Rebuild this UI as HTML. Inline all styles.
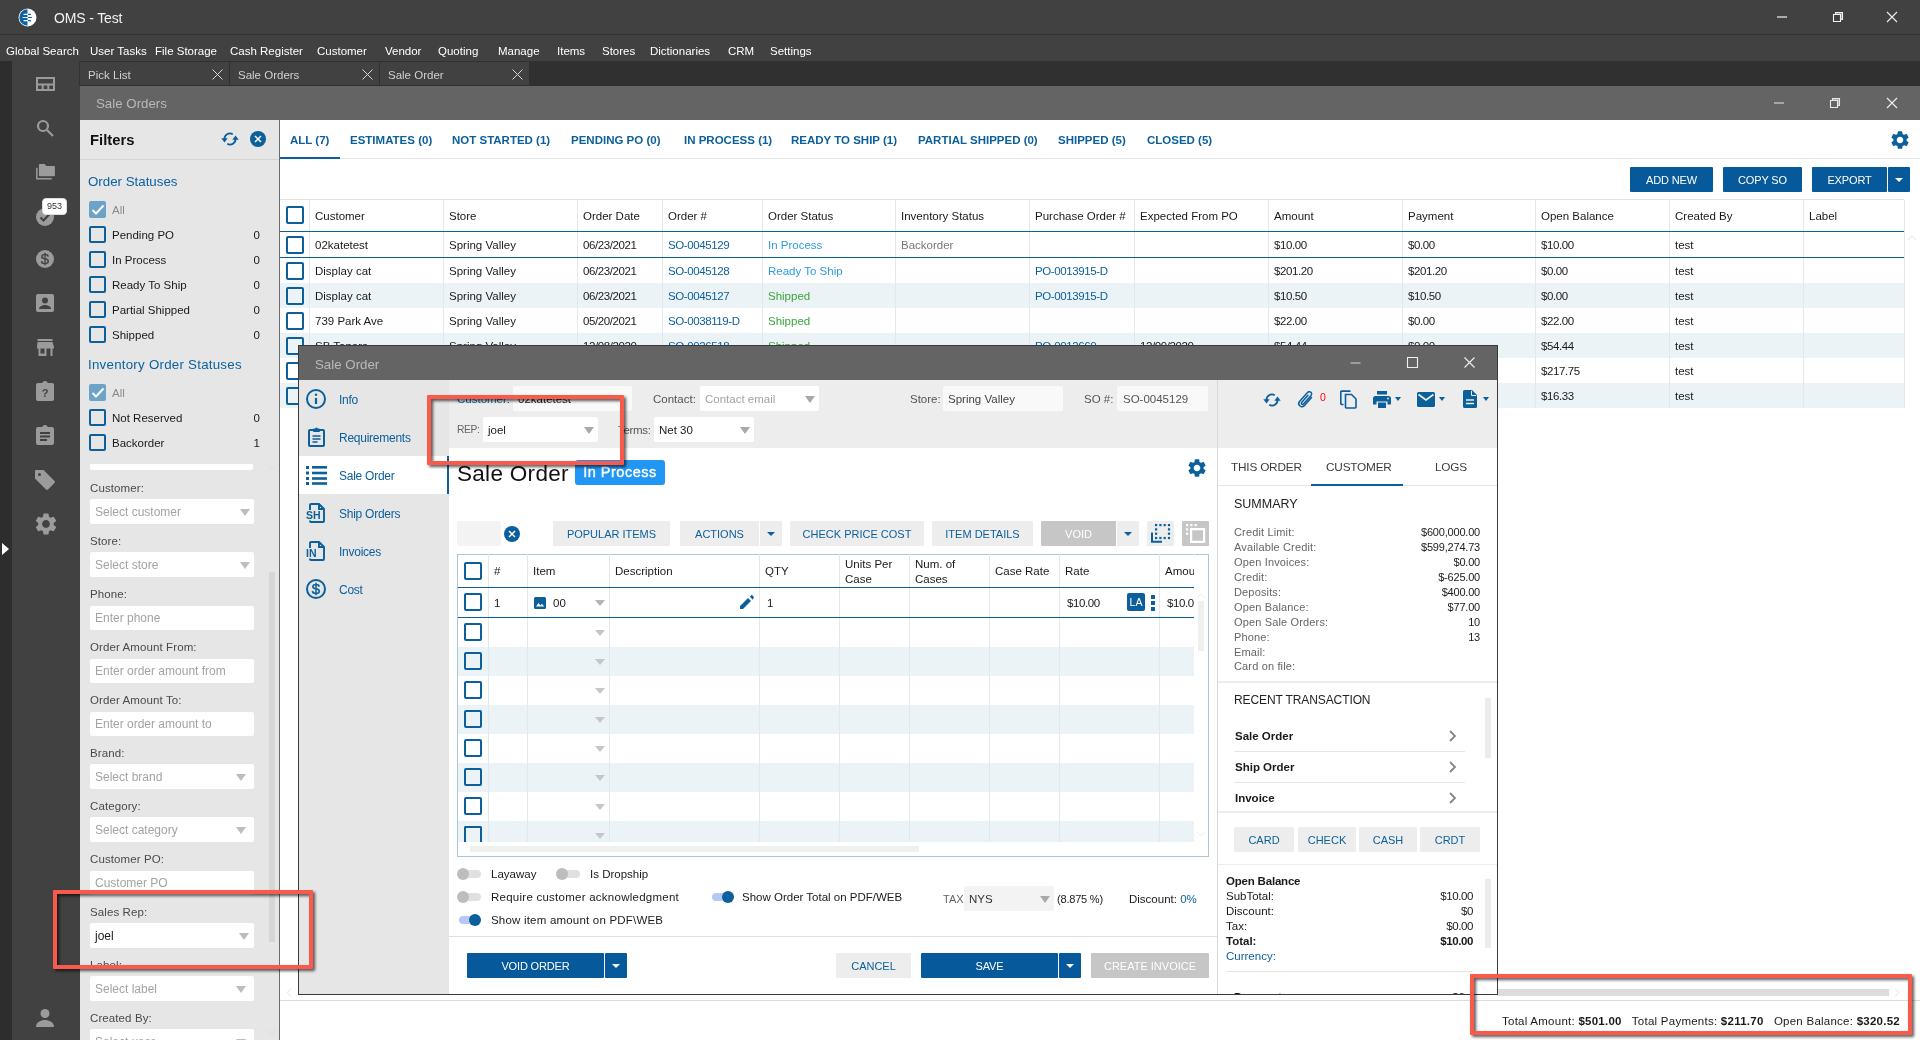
<!DOCTYPE html>
<html lang="en">
<head>
<meta charset="utf-8">
<title>OMS - Test</title>
<style>
*{box-sizing:border-box;margin:0;padding:0}
html,body{width:1920px;height:1040px;overflow:hidden;background:#fff}
body{font-family:"Liberation Sans",sans-serif;font-size:11.5px;color:#1a1a1a;position:relative}
.a{position:absolute}
.t{position:absolute;white-space:nowrap;line-height:16px;height:16px}
.w{color:#fff}
.b{font-weight:bold}
.bl{color:#0b5f9b}
.g{color:#6e6e6e}
svg{position:absolute;overflow:visible}
/* chrome */
#titlebar{left:0;top:0;width:1920px;height:34px;background:#414141}
#titleline{left:0;top:34px;width:1920px;height:1px;background:#333}
#menubar{left:0;top:35px;width:1920px;height:26px;background:#414141}
#tabstrip{left:0;top:61px;width:1920px;height:25px;background:#303030}
#leftedge{left:0;top:61px;width:12px;height:979px;background:#2d2d2d}
#sidebar{left:12px;top:61px;width:68px;height:979px;background:#414141}
.mtab{position:absolute;top:62px;height:23px;width:149px;background:#414141}
.mtab span{position:absolute;left:8px;top:5px;line-height:16px;color:#d0d0d0;font-size:11.5px}
#sohead{left:80px;top:86px;width:1840px;height:34px;background:#646464}
/* filter */
#filters{left:80px;top:120px;width:199px;height:920px;background:#e6e6e6}
#fborder{left:279px;top:120px;width:1px;height:920px;background:#6a6a6a}
.cb{position:absolute;width:17px;height:17px;border:2px solid #0b5f9b;border-radius:2px}
.cbg{background:transparent}
.cbon{position:absolute;width:17px;height:17px;border-radius:2px;background:#6ea3c8}
.fl{position:absolute;left:90px;font-size:11.5px;letter-spacing:.1px;color:#4a4a4a;line-height:14px;white-space:nowrap}
.fi{position:absolute;left:90px;width:164px;height:25px;background:#fff;border-radius:2px;font-size:12px;color:#a3a3a3;line-height:26px;padding-left:5px;white-space:nowrap}
.tri{position:absolute;width:0;height:0;border-left:5px solid transparent;border-right:5px solid transparent;border-top:7px solid #a9a9a9}
.stab{color:#0b5f9b;font-size:11.5px}
.pbtn{background:#06599a;color:#fff;text-align:center;font-size:11px;letter-spacing:-.15px;border-radius:1px;white-space:nowrap}
#root{position:absolute;left:0;top:0;width:1920px;height:1040px;overflow:hidden;will-change:transform}
</style>
</head>
<body>
<div id="root">
<!-- ===== app chrome ===== -->
<div class="a" id="titlebar"></div>
<div class="a" id="titleline"></div>
<div class="a" id="menubar"></div>
<div class="a" id="tabstrip"></div>
<div class="a" id="leftedge"></div>
<div class="a" id="sidebar"></div>
<!-- logo -->
<svg class="a" style="left:17.500px;top:7.500px" width="19" height="19" viewBox="0 0 19 19">
  <circle cx="9.5" cy="9.5" r="9" fill="#fff"/>
  <path d="M9.5 1.3 A8.2 8.2 0 0 0 9.5 17.7 Z" fill="#0b63a5"/>
  <g stroke="#fff" stroke-width="1.2" stroke-linecap="round"><path d="M6 6.3h4M5 9.5h5M6 12.7h4"/></g>
  <g stroke="#0b63a5" stroke-width="1.2" stroke-linecap="round"><path d="M10.5 6.3h2M10.5 9.5h3M10.5 12.7h2"/></g>
</svg>
<div class="t w" style="left:54px;top:8px;font-size:14px;line-height:20px;height:20px;color:#f2f2f2;letter-spacing:-.15px">OMS - Test</div>
<!-- main window controls -->
<svg style="left:1776px;top:10px" width="130" height="14" viewBox="0 0 130 14" fill="none" stroke="#f0f0f0" stroke-width="1.1">
  <path d="M1 7h10" stroke="#cfcfcf" stroke-width="1.500"/>
  <path d="M59.500 4.500v-2h7v7h-2z" fill="#9a9a9a"/><path d="M57.500 4.500h7v7h-7z" fill="#414141"/>
  <path d="M111 2l10 10M121 2l-10 10"/>
</svg>
<!-- menu -->
<div class="t w" style="left:6px;top:43px">Global Search</div>
<div class="t w" style="left:90px;top:43px">User Tasks</div>
<div class="t w" style="left:155px;top:43px">File Storage</div>
<div class="t w" style="left:230px;top:43px">Cash Register</div>
<div class="t w" style="left:317px;top:43px">Customer</div>
<div class="t w" style="left:385px;top:43px">Vendor</div>
<div class="t w" style="left:438px;top:43px">Quoting</div>
<div class="t w" style="left:498px;top:43px">Manage</div>
<div class="t w" style="left:557px;top:43px">Items</div>
<div class="t w" style="left:602px;top:43px">Stores</div>
<div class="t w" style="left:650px;top:43px">Dictionaries</div>
<div class="t w" style="left:728px;top:43px">CRM</div>
<div class="t w" style="left:770px;top:43px">Settings</div>
<!-- doc tabs -->
<div class="a" id="vline79" style="left:79px;top:61px;width:1px;height:25px;background:#333"></div>
<div class="mtab" style="left:80px"><span>Pick List</span></div>
<div class="mtab" style="left:230px"><span>Sale Orders</span></div>
<div class="mtab" style="left:380px"><span>Sale Order</span></div>
<svg style="left:212px;top:69px" width="320" height="11" viewBox="0 0 320 11" fill="none" stroke="#d8d8d8" stroke-width="1">
  <path d="M0.5 0.5l10 10M10.5 0.5l-10 10"/>
  <path d="M150.5 0.5l10 10M160.5 0.5l-10 10"/>
  <path d="M300.5 0.5l10 10M310.5 0.5l-10 10"/>
</svg>
<!-- sale orders window header -->
<div class="a" id="sohead"></div>
<div class="t" style="left:96px;top:95px;font-size:13.3px;line-height:18px;height:18px;color:#b9b9b9">Sale Orders</div>
<svg style="left:1773px;top:96px" width="130" height="14" viewBox="0 0 130 14" fill="none" stroke-width="1.1">
  <path d="M1 7h10" stroke="#bdbdbd" stroke-width="1.500"/>
  <path d="M59.500 4.500v-2h7v7h-2z" stroke="#e8e8e8" fill="#a9a9a9"/><path d="M57.500 4.500h7v7h-7z" stroke="#e8e8e8" fill="#646464"/>
  <path d="M114 2l10 10M124 2l-10 10" stroke="#f0f0f0"/>
</svg>
<!-- sidebar icons -->
<svg style="left:36px;top:77px" width="19" height="14" viewBox="0 0 19 14" fill="none" stroke="#9b9b9b" stroke-width="2"><path d="M1 1h17v12h-17zM1 7.500h17M6.700 7.500v5.500M12.300 7.500v5.500"/></svg>
<svg style="left:36px;top:119px" width="18" height="18" viewBox="0 0 18 18" fill="none" stroke="#9b9b9b" stroke-width="2.2"><circle cx="7" cy="7" r="5"/><path d="M11 11l6 6"/></svg>
<svg style="left:36px;top:164px" width="19" height="16" viewBox="0 0 20 17" fill="#9b9b9b"><path d="M4 0h5l2 2h8a1 1 0 0 1 1 1v9a1 1 0 0 1-1 1h-15a1 1 0 0 1-1-1v-11a1 1 0 0 1 1-1z"/><path d="M0 4h1.6v11h15v1.6h-15.6a1 1 0 0 1-1-1z"/></svg>
<svg style="left:36px;top:208px" width="18" height="18" viewBox="0 0 18 18"><circle cx="9" cy="9" r="9" fill="#9b9b9b"/><path d="M4.5 9.5l3 3 6-6.5" fill="none" stroke="#414141" stroke-width="2"/></svg>
<div class="a" style="left:42px;top:198px;width:25px;height:17px;border-radius:4px;background:#fff;border:1px solid #ddd;font-size:9px;line-height:15px;text-align:center;color:#333">953</div>
<svg style="left:36px;top:250px" width="18" height="18" viewBox="0 0 18 18"><circle cx="9" cy="9" r="9" fill="#9b9b9b"/><text x="9" y="14.3" font-size="15" font-family="Liberation Sans" fill="#414141" stroke="#414141" stroke-width=".3" text-anchor="middle">$</text></svg>
<svg style="left:36px;top:294px" width="18" height="18" viewBox="0 0 18 18"><path d="M2 0h14a2 2 0 0 1 2 2v14a2 2 0 0 1-2 2h-14a2 2 0 0 1-2-2v-14a2 2 0 0 1 2-2z" fill="#9b9b9b"/><circle cx="9" cy="6.5" r="3" fill="#414141"/><path d="M3 15c0-3 4-4 6-4s6 1 6 4z" fill="#414141"/></svg>
<svg style="left:36px;top:339px" width="18" height="17" viewBox="0 0 18 17" fill="#9b9b9b"><path d="M1.5 0h15v2h-15z"/><path d="M1.5 3h15l1.5 5v1.5h-1.5v7.5h-2v-7.5h-4v7.5h-8v-7.5h-1.500v-1.500zM4.500 9.500v5h4v-5z"/></svg>
<svg style="left:36px;top:381px" width="18" height="20" viewBox="0 0 18 20"><path d="M2 2h4.200a3 3 0 0 1 5.600 0h4.200a2 2 0 0 1 2 2v14a2 2 0 0 1-2 2h-14a2 2 0 0 1-2-2v-14a2 2 0 0 1 2-2z" fill="#9b9b9b"/><text x="9" y="15.500" font-size="11" font-family="Liberation Sans" font-weight="bold" fill="#414141" text-anchor="middle">?</text></svg>
<svg style="left:36px;top:425px" width="18" height="20" viewBox="0 0 18 20"><path d="M2 2h4.200a3 3 0 0 1 5.600 0h4.200a2 2 0 0 1 2 2v14a2 2 0 0 1-2 2h-14a2 2 0 0 1-2-2v-14a2 2 0 0 1 2-2z" fill="#9b9b9b"/><path d="M4 8h10M4 11.500h10M4 15h7" stroke="#414141" stroke-width="1.800"/></svg>
<svg style="left:35px;top:470px" width="20" height="20" viewBox="0 0 20 20"><path d="M1 0h7.500l11 11a1.500 1.500 0 0 1 0 2l-6.500 6.500a1.500 1.500 0 0 1-2 0l-11-11v-7.500a1 1 0 0 1 1-1z" fill="#9b9b9b"/><circle cx="4.500" cy="4.500" r="1.500" fill="#414141"/></svg>
<svg style="left:32.5px;top:511px" width="26" height="26" viewBox="0 0 24 24"><path fill="#9b9b9b" d="M19.140 12.940c.040-.300.060-.610.060-.940 0-.320-.020-.640-.070-.940l2.030-1.580a.49.490 0 0 0 .12-.610l-1.920-3.320a.488.488 0 0 0-.590-.220l-2.390.960c-.500-.380-1.030-.700-1.620-.940l-.360-2.540a.484.484 0 0 0-.480-.410h-3.840c-.240 0-.430.170-.470.410l-.360 2.540c-.590.240-1.130.570-1.620.940l-2.390-.960c-.220-.080-.470 0-.590.220L2.740 8.870c-.120.210-.080.470.120.610l2.030 1.580c-.050.300-.090.630-.090.940s.020.640.070.940l-2.030 1.580a.49.490 0 0 0-.12.610l1.920 3.320c.120.220.370.290.590.220l2.390-.960c.500.380 1.030.700 1.620.940l.360 2.540c.050.240.240.410.480.410h3.840c.240 0 .440-.170.470-.410l.360-2.540c.590-.240 1.130-.560 1.620-.940l2.390.960c.220.080.470 0 .590-.220l1.920-3.320c.120-.220.070-.470-.120-.610l-2.010-1.580zM12 15.600c-1.980 0-3.600-1.620-3.600-3.600s1.620-3.600 3.600-3.600 3.600 1.620 3.600 3.600-1.620 3.600-3.600 3.600z"/></svg>
<svg style="left:36px;top:1009px" width="18" height="18" viewBox="0 0 18 18" fill="#9b9b9b"><circle cx="9" cy="4.500" r="4.500"/><path d="M0 18c0-5 5-7 9-7s9 2 9 7z"/></svg>
<svg style="left:2px;top:543px" width="7" height="12" viewBox="0 0 7 12"><path d="M0 0l7 6-7 6z" fill="#fff"/></svg>
<!--CHROME-->
<!--FILTERS_START-->
<div class="a" id="filters"></div><div class="a" id="fborder"></div>
<div class="t b" style="left:90px;top:130px;font-size:14.8px;line-height:20px;height:20px;color:#111">Filters</div>
<div class="a" style="left:80px;top:159px;width:199px;height:1px;background:#d4d4d4"></div>
<svg style="left:220.500px;top:131.500px" width="18" height="14" viewBox="0 0 18 14" fill="none" stroke="#0b5f9b" stroke-width="1.800"><path d="M3.500 7.500A5.500 5.500 0 0 1 11.750 2.240"/><path d="M14.500 6.500A5.500 5.500 0 0 1 6.250 11.760"/><path d="M0.300 6.300h6.400l-3.200 4.200z" fill="#0b5f9b" stroke="none"/><path d="M11.300 7.700h6.400l-3.200-4.200z" fill="#0b5f9b" stroke="none"/></svg>
<svg style="left:250px;top:131px" width="16" height="16" viewBox="0 0 16 16"><circle cx="8" cy="8" r="8" fill="#0b5f9b"/><path d="M5 5l6 6M11 5l-6 6" stroke="#fff" stroke-width="1.500"/></svg>
<div class="t" style="left:88px;top:173px;font-size:13.3px;line-height:18px;height:18px;color:#0b62a0">Order Statuses</div>
<div class="cbon" style="left:89px;top:201px"></div><svg style="left:91px;top:204px" width="14" height="12" viewBox="0 0 14 12"><path d="M1.500 6l3.500 3.500 7.500-8" fill="none" stroke="#fff" stroke-width="2"/></svg>
<div class="t" style="left:112px;top:202px;color:#8a8a8a">All</div>
<div class="cb" style="left:89px;top:226px"></div>
<div class="t" style="left:112px;top:227px">Pending PO</div>
<div class="t" style="left:230px;width:30px;text-align:right;top:227px">0</div>
<div class="cb" style="left:89px;top:251px"></div>
<div class="t" style="left:112px;top:252px">In Process</div>
<div class="t" style="left:230px;width:30px;text-align:right;top:252px">0</div>
<div class="cb" style="left:89px;top:276px"></div>
<div class="t" style="left:112px;top:277px">Ready To Ship</div>
<div class="t" style="left:230px;width:30px;text-align:right;top:277px">0</div>
<div class="cb" style="left:89px;top:301px"></div>
<div class="t" style="left:112px;top:302px">Partial Shipped</div>
<div class="t" style="left:230px;width:30px;text-align:right;top:302px">0</div>
<div class="cb" style="left:89px;top:326px"></div>
<div class="t" style="left:112px;top:327px">Shipped</div>
<div class="t" style="left:230px;width:30px;text-align:right;top:327px">0</div>
<div class="t" style="left:88px;top:356px;font-size:13.3px;line-height:18px;height:18px;color:#0b62a0;letter-spacing:.25px">Inventory Order Statuses</div>
<div class="cbon" style="left:89px;top:384px"></div><svg style="left:91px;top:387px" width="14" height="12" viewBox="0 0 14 12"><path d="M1.500 6l3.500 3.500 7.500-8" fill="none" stroke="#fff" stroke-width="2"/></svg>
<div class="t" style="left:112px;top:385px;color:#8a8a8a">All</div>
<div class="cb" style="left:89px;top:409px"></div>
<div class="t" style="left:112px;top:410px">Not Reserved</div>
<div class="t" style="left:230px;width:30px;text-align:right;top:410px">0</div>
<div class="cb" style="left:89px;top:434px"></div>
<div class="t" style="left:112px;top:435px">Backorder</div>
<div class="t" style="left:230px;width:30px;text-align:right;top:435px">1</div>
<div class="a" style="left:90px;top:464px;width:163px;height:6px;background:#fff;border-radius:0 0 2px 2px"></div>
<div class="fl" style="top:481px">Customer:</div>
<div class="fi" style="top:499px">Select customer</div>
<div class="tri" style="left:240px;top:508.5px;border-top-color:#bdbdbd"></div>
<div class="fl" style="top:534px">Store:</div>
<div class="fi" style="top:552px">Select store</div>
<div class="tri" style="left:239.5px;top:561.5px;border-top-color:#bdbdbd"></div>
<div class="fl" style="top:587px">Phone:</div>
<div class="fi" style="top:606px;height:24px;line-height:24px">Enter phone</div>
<div class="fl" style="top:640px">Order Amount From:</div>
<div class="fi" style="top:659px;height:24px;line-height:24px">Enter order amount from</div>
<div class="fl" style="top:693px">Order Amount To:</div>
<div class="fi" style="top:712px;height:24px;line-height:24px">Enter order amount to</div>
<div class="fl" style="top:746px">Brand:</div>
<div class="fi" style="top:764px">Select brand</div>
<div class="tri" style="left:236px;top:773.5px;border-top-color:#bdbdbd"></div>
<div class="fl" style="top:799px">Category:</div>
<div class="fi" style="top:817px">Select category</div>
<div class="tri" style="left:236px;top:826.5px;border-top-color:#bdbdbd"></div>
<div class="fl" style="top:852px">Customer PO:</div>
<div class="fi" style="top:871px;height:24px;line-height:24px">Customer PO</div>
<div class="fl" style="top:905px">Sales Rep:</div>
<div class="fi" style="top:923px;color:#1a1a1a">joel</div>
<div class="tri" style="left:239px;top:932.5px;border-top-color:#bdbdbd"></div>
<div class="fl" style="top:958px">Label:</div>
<div class="fi" style="top:976px">Select label</div>
<div class="tri" style="left:236px;top:985.5px;border-top-color:#bdbdbd"></div>
<div class="fl" style="top:1011px">Created By:</div>
<div class="fi" style="top:1029px">Select user</div>
<div class="tri" style="left:236px;top:1038.5px;border-top-color:#bdbdbd"></div>
<div class="a" style="left:269px;top:572px;width:6px;height:370px;background:#d6d6d6"></div>
<svg style="left:267px;top:466px" width="10" height="6" viewBox="0 0 10 6"><path d="M1 5l4-4 4 4" fill="none" stroke="#dcdcdc" stroke-width="1"/></svg>
<svg style="left:267px;top:1029px" width="10" height="6" viewBox="0 0 10 6"><path d="M1 1l4 4 4-4" fill="none" stroke="#dcdcdc" stroke-width="1"/></svg>
<!--FILTERS-->
<!--MAIN_START-->
<div class="t b stab" style="left:290px;top:132px" >ALL (7)</div>
<div class="t b stab" style="left:350px;top:132px" >ESTIMATES (0)</div>
<div class="t b stab" style="left:452px;top:132px" >NOT STARTED (1)</div>
<div class="t b stab" style="left:571px;top:132px" >PENDING PO (0)</div>
<div class="t b stab" style="left:684px;top:132px" >IN PROCESS (1)</div>
<div class="t b stab" style="left:791px;top:132px" >READY TO SHIP (1)</div>
<div class="t b stab" style="left:918px;top:132px" >PARTIAL SHIPPED (0)</div>
<div class="t b stab" style="left:1058px;top:132px" >SHIPPED (5)</div>
<div class="t b stab" style="left:1147px;top:132px" >CLOSED (5)</div>
<div class="a" style="left:280px;top:157px;width:60px;height:2px;background:#0b5f9b"></div>
<div class="a" style="left:340px;top:158px;width:1580px;height:1px;background:#e4e4e4"></div>
<svg style="left:1889px;top:129px" width="22" height="22" viewBox="0 0 24 24"><path fill="#0b5f9b" d="M19.140 12.940c.040-.300.060-.610.060-.940 0-.320-.020-.640-.070-.940l2.030-1.580a.49.490 0 0 0 .12-.610l-1.920-3.320a.488.488 0 0 0-.590-.220l-2.390.960c-.500-.380-1.030-.700-1.620-.940l-.360-2.540a.484.484 0 0 0-.480-.410h-3.840c-.240 0-.430.170-.470.410l-.360 2.540c-.590.240-1.130.570-1.620.940l-2.390-.960c-.220-.080-.470 0-.590.220L2.740 8.870c-.120.210-.080.470.120.610l2.030 1.580c-.050.300-.090.630-.090.940s.020.640.070.940l-2.030 1.580a.49.490 0 0 0-.12.610l1.920 3.320c.120.220.370.290.590.220l2.390-.960c.500.380 1.030.700 1.620.940l.360 2.540c.050.240.240.410.480.410h3.840c.240 0 .440-.170.470-.410l.360-2.540c.590-.240 1.130-.560 1.620-.940l2.390.960c.220.080.470 0 .590-.220l1.920-3.320c.120-.220.070-.470-.120-.610l-2.010-1.580zM12 15.600c-1.980 0-3.600-1.620-3.600-3.600s1.620-3.600 3.600-3.600 3.600 1.620 3.600 3.600-1.620 3.600-3.600 3.600z"/></svg>
<div class="a pbtn" style="left:1630px;top:167px;width:83px;height:25px;line-height:26px">ADD NEW</div>
<div class="a pbtn" style="left:1723px;top:167px;width:79px;height:25px;line-height:26px">COPY SO</div>
<div class="a pbtn" style="left:1812px;top:167px;width:75px;height:25px;line-height:26px">EXPORT</div>
<div class="a pbtn" style="left:1888px;top:167px;width:22px;height:25px"></div><div class="tri" style="left:1895px;top:178px;border-top-color:#fff;border-width:4px 4px 0 4px;border-top-width:4px"></div>
<div class="a" style="left:280px;top:199px;width:1624px;height:1px;background:#dfe3e6"></div>
<div class="a" style="left:280px;top:283px;width:1624px;height:25px;background:#ecf3f7"></div>
<div class="a" style="left:280px;top:333px;width:1624px;height:25px;background:#ecf3f7"></div>
<div class="a" style="left:280px;top:383px;width:1624px;height:25px;background:#ecf3f7"></div>
<div class="a" style="left:309px;top:200px;width:1px;height:208px;background:#e3e8ec"></div>
<div class="a" style="left:443px;top:200px;width:1px;height:208px;background:#e3e8ec"></div>
<div class="a" style="left:577px;top:200px;width:1px;height:208px;background:#e3e8ec"></div>
<div class="a" style="left:662px;top:200px;width:1px;height:208px;background:#e3e8ec"></div>
<div class="a" style="left:762px;top:200px;width:1px;height:208px;background:#e3e8ec"></div>
<div class="a" style="left:895px;top:200px;width:1px;height:208px;background:#e3e8ec"></div>
<div class="a" style="left:1029px;top:200px;width:1px;height:208px;background:#e3e8ec"></div>
<div class="a" style="left:1134px;top:200px;width:1px;height:208px;background:#e3e8ec"></div>
<div class="a" style="left:1268px;top:200px;width:1px;height:208px;background:#e3e8ec"></div>
<div class="a" style="left:1402px;top:200px;width:1px;height:208px;background:#e3e8ec"></div>
<div class="a" style="left:1535px;top:200px;width:1px;height:208px;background:#e3e8ec"></div>
<div class="a" style="left:1669px;top:200px;width:1px;height:208px;background:#e3e8ec"></div>
<div class="a" style="left:1803px;top:200px;width:1px;height:208px;background:#e3e8ec"></div>
<div class="a" style="left:1904px;top:200px;width:1px;height:208px;background:#e3e8ec"></div>
<div class="t" style="left:315px;top:208px">Customer</div>
<div class="t" style="left:449px;top:208px">Store</div>
<div class="t" style="left:583px;top:208px">Order Date</div>
<div class="t" style="left:668px;top:208px">Order #</div>
<div class="t" style="left:768px;top:208px">Order Status</div>
<div class="t" style="left:901px;top:208px">Inventory Status</div>
<div class="t" style="left:1035px;top:208px">Purchase Order #</div>
<div class="t" style="left:1140px;top:208px">Expected From PO</div>
<div class="t" style="left:1274px;top:208px">Amount</div>
<div class="t" style="left:1408px;top:208px">Payment</div>
<div class="t" style="left:1541px;top:208px">Open Balance</div>
<div class="t" style="left:1675px;top:208px">Created By</div>
<div class="t" style="left:1809px;top:208px">Label</div>
<div class="cb" style="left:286px;top:206px;width:18px;height:18px"></div>
<div class="a" style="left:280px;top:231px;width:1624px;height:1px;background:#0b5f9b"></div>
<div class="a" style="left:280px;top:257px;width:1624px;height:1px;background:#0b5f9b"></div>
<div class="cb" style="left:286px;top:236px;width:18px;height:18px"></div>
<div class="t" style="left:315px;top:237px">02katetest</div>
<div class="t" style="left:449px;top:237px">Spring Valley</div>
<div class="t" style="left:583px;top:237px;letter-spacing:-.4px">06/23/2021</div>
<div class="t" style="left:668px;top:237px;color:#0b5f9b;letter-spacing:-.4px">SO-0045129</div>
<div class="t" style="left:768px;top:237px;color:#2f9ae0">In Process</div>
<div class="t" style="left:901px;top:237px;color:#777">Backorder</div>
<div class="t" style="left:1274px;top:237px;letter-spacing:-.4px">$10.00</div>
<div class="t" style="left:1408px;top:237px;letter-spacing:-.4px">$0.00</div>
<div class="t" style="left:1541px;top:237px;letter-spacing:-.4px">$10.00</div>
<div class="t" style="left:1675px;top:237px">test</div>
<div class="cb" style="left:286px;top:262px;width:18px;height:18px"></div>
<div class="t" style="left:315px;top:263px">Display cat</div>
<div class="t" style="left:449px;top:263px">Spring Valley</div>
<div class="t" style="left:583px;top:263px;letter-spacing:-.4px">06/23/2021</div>
<div class="t" style="left:668px;top:263px;color:#0b5f9b;letter-spacing:-.4px">SO-0045128</div>
<div class="t" style="left:768px;top:263px;color:#2f9ae0">Ready To Ship</div>
<div class="t" style="left:1035px;top:263px;color:#0b5f9b;letter-spacing:-.4px">PO-0013915-D</div>
<div class="t" style="left:1274px;top:263px;letter-spacing:-.4px">$201.20</div>
<div class="t" style="left:1408px;top:263px;letter-spacing:-.4px">$201.20</div>
<div class="t" style="left:1541px;top:263px;letter-spacing:-.4px">$0.00</div>
<div class="t" style="left:1675px;top:263px">test</div>
<div class="cb" style="left:286px;top:287px;width:18px;height:18px"></div>
<div class="t" style="left:315px;top:288px">Display cat</div>
<div class="t" style="left:449px;top:288px">Spring Valley</div>
<div class="t" style="left:583px;top:288px;letter-spacing:-.4px">06/23/2021</div>
<div class="t" style="left:668px;top:288px;color:#0b5f9b;letter-spacing:-.4px">SO-0045127</div>
<div class="t" style="left:768px;top:288px;color:#3aa53a">Shipped</div>
<div class="t" style="left:1035px;top:288px;color:#0b5f9b;letter-spacing:-.4px">PO-0013915-D</div>
<div class="t" style="left:1274px;top:288px;letter-spacing:-.4px">$10.50</div>
<div class="t" style="left:1408px;top:288px;letter-spacing:-.4px">$10.50</div>
<div class="t" style="left:1541px;top:288px;letter-spacing:-.4px">$0.00</div>
<div class="t" style="left:1675px;top:288px">test</div>
<div class="cb" style="left:286px;top:312px;width:18px;height:18px"></div>
<div class="t" style="left:315px;top:313px">739 Park Ave</div>
<div class="t" style="left:449px;top:313px">Spring Valley</div>
<div class="t" style="left:583px;top:313px;letter-spacing:-.4px">05/20/2021</div>
<div class="t" style="left:668px;top:313px;color:#0b5f9b;letter-spacing:-.4px">SO-0038119-D</div>
<div class="t" style="left:768px;top:313px;color:#3aa53a">Shipped</div>
<div class="t" style="left:1274px;top:313px;letter-spacing:-.4px">$22.00</div>
<div class="t" style="left:1408px;top:313px;letter-spacing:-.4px">$0.00</div>
<div class="t" style="left:1541px;top:313px;letter-spacing:-.4px">$22.00</div>
<div class="t" style="left:1675px;top:313px">test</div>
<div class="cb" style="left:286px;top:337px;width:18px;height:18px"></div>
<div class="t" style="left:315px;top:338px">SB Tapers</div>
<div class="t" style="left:449px;top:338px">Spring Valley</div>
<div class="t" style="left:583px;top:338px;letter-spacing:-.4px">12/08/2020</div>
<div class="t" style="left:668px;top:338px;color:#0b5f9b;letter-spacing:-.4px">SO-0026518</div>
<div class="t" style="left:768px;top:338px;color:#3aa53a">Shipped</div>
<div class="t" style="left:1035px;top:338px;color:#0b5f9b;letter-spacing:-.4px">PO-0012660</div>
<div class="t" style="left:1140px;top:338px;letter-spacing:-.4px">12/09/2020</div>
<div class="t" style="left:1274px;top:338px;letter-spacing:-.4px">$54.44</div>
<div class="t" style="left:1408px;top:338px;letter-spacing:-.4px">$0.00</div>
<div class="t" style="left:1541px;top:338px;letter-spacing:-.4px">$54.44</div>
<div class="t" style="left:1675px;top:338px">test</div>
<div class="cb" style="left:286px;top:362px;width:18px;height:18px"></div>
<div class="t" style="left:315px;top:363px">SB Tapers</div>
<div class="t" style="left:449px;top:363px">Spring Valley</div>
<div class="t" style="left:583px;top:363px;letter-spacing:-.4px">12/08/2020</div>
<div class="t" style="left:668px;top:363px;color:#0b5f9b;letter-spacing:-.4px">SO-0026517</div>
<div class="t" style="left:768px;top:363px;color:#3aa53a">Shipped</div>
<div class="t" style="left:1274px;top:363px;letter-spacing:-.4px">$217.75</div>
<div class="t" style="left:1408px;top:363px;letter-spacing:-.4px">$0.00</div>
<div class="t" style="left:1541px;top:363px;letter-spacing:-.4px">$217.75</div>
<div class="t" style="left:1675px;top:363px">test</div>
<div class="cb" style="left:286px;top:387px;width:18px;height:18px"></div>
<div class="t" style="left:315px;top:388px">SB Tapers</div>
<div class="t" style="left:449px;top:388px">Spring Valley</div>
<div class="t" style="left:583px;top:388px;letter-spacing:-.4px">12/08/2020</div>
<div class="t" style="left:668px;top:388px;color:#0b5f9b;letter-spacing:-.4px">SO-0026516</div>
<div class="t" style="left:768px;top:388px;color:#3aa53a">Shipped</div>
<div class="t" style="left:1274px;top:388px;letter-spacing:-.4px">$16.33</div>
<div class="t" style="left:1408px;top:388px;letter-spacing:-.4px">$0.00</div>
<div class="t" style="left:1541px;top:388px;letter-spacing:-.4px">$16.33</div>
<div class="t" style="left:1675px;top:388px">test</div>
<svg style="left:1907px;top:235px" width="10" height="6" viewBox="0 0 10 6"><path d="M1 5l4-4 4 4" fill="none" stroke="#e6e6e6" stroke-width="1"/></svg>
<div class="a" style="left:280px;top:1000px;width:1640px;height:1px;background:#dcdcdc"></div>
<div class="a" style="left:1497px;top:989px;width:392px;height:7px;background:#dcdcdc"></div>
<svg style="left:286px;top:988px" width="6" height="9" viewBox="0 0 6 9"><path d="M5 .5l-4 4 4 4" fill="none" stroke="#e0e0e0" stroke-width="1"/></svg>
<svg style="left:1894px;top:988px" width="6" height="9" viewBox="0 0 6 9"><path d="M1 .5l4 4-4 4" fill="none" stroke="#e0e0e0" stroke-width="1"/></svg>
<div class="t" style="right:20px;top:1013px;left:auto;letter-spacing:.25px">Total Amount: <b>$501.00</b> &nbsp; Total Payments: <b>$211.70</b> &nbsp; Open Balance: <b>$320.52</b></div>
<!--MAIN-->
<!--SOWIN_START-->
<div class="a" style="left:298px;top:345px;width:1200px;height:650px;background:#fff;border:1px solid #3a3a3a"></div>
<div class="a" style="left:299px;top:346px;width:1198px;height:34px;background:#646464"></div>
<div class="t" style="left:315px;top:356px;font-size:13.3px;color:#b9b9b9;line-height:18px;height:18px">Sale Order</div>
<svg style="left:1350px;top:357px" width="126" height="12" viewBox="0 0 126 12" fill="none" stroke-width="1.1"><path d="M0.500 6h10" stroke="#b4b4b4" stroke-width="1.400"/><path d="M57.500 0.500h10v10h-10z" stroke="#f0f0f0"/><path d="M114.500 0.500l10 10M124.500 0.500l-10 10" stroke="#f0f0f0"/></svg>
<div class="a" style="left:299px;top:380px;width:150px;height:614px;background:#e6e6e6"></div>
<div class="a" style="left:299px;top:456px;width:149px;height:38px;background:#fff"></div>
<div class="a" style="left:447px;top:456px;width:2px;height:38px;background:#0b5f9b"></div>
<div class="t" style="left:339px;top:392px;color:#0b5f9b;font-size:12px;letter-spacing:-.25px">Info</div>
<div class="t" style="left:339px;top:430px;color:#0b5f9b;font-size:12px;letter-spacing:-.25px">Requirements</div>
<div class="t" style="left:339px;top:468px;color:#0b5f9b;font-size:12px;letter-spacing:-.25px">Sale Order</div>
<div class="t" style="left:339px;top:506px;color:#0b5f9b;font-size:12px;letter-spacing:-.25px">Ship Orders</div>
<div class="t" style="left:339px;top:544px;color:#0b5f9b;font-size:12px;letter-spacing:-.25px">Invoices</div>
<div class="t" style="left:339px;top:582px;color:#0b5f9b;font-size:12px;letter-spacing:-.25px">Cost</div>
<svg style="left:306px;top:389px" width="20" height="20" viewBox="0 0 20 20" fill="none" stroke="#0b5f9b" stroke-width="2"><circle cx="10" cy="10" r="9"/><path d="M10 9v6" stroke-width="2.200"/><circle cx="10" cy="5.800" r="1.200" fill="#0b5f9b" stroke="none"/></svg>
<svg style="left:308px;top:427px" width="17" height="20" viewBox="0 0 17 20" fill="none" stroke="#0b5f9b" stroke-width="2"><path d="M5 3h-3a1 1 0 0 0-1 1v14a1 1 0 0 0 1 1h13a1 1 0 0 0 1-1v-14a1 1 0 0 0-1-1h-3"/><path d="M5.500 4.500v-2.500h2a1 1 0 0 1 2 0h2v2.500z" fill="#0b5f9b" stroke-width="1"/><path d="M4.500 9h8M4.500 12h8M4.500 15h5" stroke-width="1.500"/></svg>
<svg style="left:306px;top:465px" width="21" height="20" viewBox="0 0 21 20" fill="#0b5f9b"><rect x="0" y="1" width="3" height="3"/><rect x="6" y="1" width="15" height="2.600"/><rect x="0" y="6.500" width="3" height="3"/><rect x="6" y="6.700" width="15" height="2.600"/><rect x="0" y="12" width="3" height="3"/><rect x="6" y="12.200" width="15" height="2.600"/><rect x="0" y="17" width="3" height="3"/><rect x="6" y="17.200" width="15" height="2.600"/></svg>
<svg style="left:307px;top:503px" width="19" height="20" viewBox="0 0 19 20" fill="none" stroke="#0b5f9b" stroke-width="1.900"><path d="M3 7v-5a1 1 0 0 1 1-1h8l5 5v12a1 1 0 0 1-1 1h-12a1 1 0 0 1-1-1v-.5"/><path d="M12 1v5h5"/><text x="-1" y="16.300" font-family="Liberation Sans" font-weight="bold" font-size="10.500" fill="#0b5f9b" stroke="none">SH</text></svg>
<svg style="left:307px;top:541px" width="19" height="20" viewBox="0 0 19 20" fill="none" stroke="#0b5f9b" stroke-width="1.900"><path d="M3 7v-5a1 1 0 0 1 1-1h8l5 5v12a1 1 0 0 1-1 1h-12a1 1 0 0 1-1-1v-.5"/><path d="M12 1v5h5"/><text x="-1" y="16.300" font-family="Liberation Sans" font-weight="bold" font-size="10.500" fill="#0b5f9b" stroke="none">IN</text></svg>
<svg style="left:306px;top:579px" width="20" height="20" viewBox="0 0 20 20" fill="none" stroke="#0b5f9b" stroke-width="2"><circle cx="10" cy="10" r="9"/><text x="10" y="15.300" font-family="Liberation Sans" font-size="15" fill="#0b5f9b" stroke="#0b5f9b" stroke-width=".5" text-anchor="middle">$</text></svg>
<div class="a" style="left:449px;top:380px;width:1048px;height:68px;background:#ededed"></div>
<div class="a" style="left:1217px;top:380px;width:1px;height:614px;background:#d9d9d9"></div>
<div class="t" style="left:457px;top:391px;color:#0b5f9b">Customer:</div>
<div class="a" style="left:513px;top:386px;width:119px;height:25px;background:#f9f9f9;border-radius:2px;color:#1a1a1a;line-height:26px;padding-left:5px;white-space:nowrap;overflow:hidden">02katetest</div>
<div class="t" style="left:653px;top:391px;color:#555">Contact:</div>
<div class="a" style="left:700px;top:386px;width:119px;height:25px;background:#fff;border-radius:2px;color:#a3a3a3;line-height:26px;padding-left:5px;white-space:nowrap;overflow:hidden">Contact email</div>
<div class="tri" style="left:805px;top:396px"></div>
<div class="t" style="left:910px;top:391px;color:#555">Store:</div>
<div class="a" style="left:943px;top:386px;width:120px;height:25px;background:#f9f9f9;border-radius:2px;color:#444;line-height:26px;padding-left:5px;white-space:nowrap;overflow:hidden">Spring Valley</div>
<div class="t" style="left:1084px;top:391px;color:#555">SO #:</div>
<div class="a" style="left:1117px;top:386px;width:91px;height:25px;background:#f9f9f9;border-radius:2px;color:#555;line-height:26px;padding-left:5px;white-space:nowrap;overflow:hidden">&#8202;SO-0045129</div>
<div class="t" style="left:457px;top:422px;color:#666;font-size:10.300px;letter-spacing:-.4px">REP:</div>
<div class="a" style="left:483px;top:417px;width:115px;height:25px;background:#fff;border-radius:2px;color:#1a1a1a;line-height:26px;padding-left:5px;white-space:nowrap;overflow:hidden">joel</div>
<div class="tri" style="left:584px;top:427px"></div>
<div class="t" style="left:618px;top:422px;color:#555;letter-spacing:-.3px">Terms:</div>
<div class="a" style="left:654px;top:417px;width:100px;height:25px;background:#fff;border-radius:2px;color:#1a1a1a;line-height:26px;padding-left:5px;white-space:nowrap;overflow:hidden">Net 30</div>
<div class="tri" style="left:740px;top:427px"></div>
<svg style="left:1263px;top:392.500px" width="18" height="14" viewBox="0 0 18 14" fill="none" stroke="#0b5f9b" stroke-width="1.800"><path d="M3.500 7.500A5.500 5.500 0 0 1 11.750 2.240"/><path d="M14.500 6.500A5.500 5.500 0 0 1 6.250 11.760"/><path d="M0.300 6.300h6.400l-3.200 4.200z" fill="#0b5f9b" stroke="none"/><path d="M11.300 7.700h6.400l-3.200-4.200z" fill="#0b5f9b" stroke="none"/></svg>
<svg style="left:1297px;top:390px" width="18" height="19" viewBox="0 0 18 19" fill="none" stroke="#0b5f9b" stroke-width="1.500" stroke-linecap="round"><path d="M14.500 7.500l-7 8a3.200 3.200 0 0 1-5-4l8-9a2.300 2.300 0 0 1 3.600 2.900l-7.600 8.600a1.200 1.200 0 0 1-1.900-1.500l6.400-7.300"/></svg>
<div class="t" style="left:1320px;top:389px;color:#f00;font-size:10.500px">0</div>
<svg style="left:1340px;top:390px" width="17" height="19" viewBox="0 0 17 19" fill="none" stroke="#0b5f9b" stroke-width="1.600"><path d="M3.500 14.500h-2a.7.700 0 0 1-.7-.7v-12a.7.700 0 0 1 .7-.7h9"/><path d="M5.500 4.500h6l4.500 4.500v8.300a.7.700 0 0 1-.7.700h-9.100a.7.700 0 0 1-.7-.7z"/></svg>
<svg style="left:1373px;top:391px" width="18" height="17" viewBox="0 0 18 17" fill="#0b5f9b"><rect x="4" y="0" width="10" height="3.500"/><path d="M2.500 5h13a2.500 2.500 0 0 1 2.500 2.500v6h-3.500v-3h-11v3h-3.500v-6a2.500 2.500 0 0 1 2.500-2.500z"/><rect x="5" y="11.500" width="8" height="5.500"/><circle cx="15" cy="7.500" r=".9" fill="#ededed"/></svg>
<svg style="left:1417px;top:392px" width="18" height="15" viewBox="0 0 18 15" fill="#0b5f9b"><path d="M1.500 0h15a1.500 1.500 0 0 1 1.500 1.500v12a1.500 1.500 0 0 1-1.500 1.500h-15a1.500 1.500 0 0 1-1.500-1.500v-12a1.500 1.500 0 0 1 1.500-1.500z"/><path d="M1.500 2.500l7.500 5.500 7.500-5.500" fill="none" stroke="#ededed" stroke-width="1.700"/></svg>
<svg style="left:1463px;top:390px" width="14" height="18" viewBox="0 0 14 18" fill="#0b5f9b"><path d="M1.500 0h7.500l5 5v11.500a1.500 1.500 0 0 1-1.500 1.500h-11a1.500 1.500 0 0 1-1.500-1.500v-15a1.500 1.500 0 0 1 1.500-1.500z"/><path d="M3 10h8M3 13.500h8" stroke="#ededed" stroke-width="1.600"/><path d="M8.500 0.800v4.700h4.700" fill="none" stroke="#ededed" stroke-width="1"/></svg>
<div class="tri" style="left:1395.0px;top:397px;border-width:4px 3.500px 0 3.500px;border-top-color:#0b5f9b"></div>
<div class="tri" style="left:1439.0px;top:397px;border-width:4px 3.500px 0 3.500px;border-top-color:#0b5f9b"></div>
<div class="tri" style="left:1483.0px;top:397px;border-width:4px 3.500px 0 3.500px;border-top-color:#0b5f9b"></div>
<div class="t" style="left:457px;top:459px;font-size:22.5px;line-height:30px;height:30px;color:#111;letter-spacing:.3px">Sale Order</div>
<div class="a" style="left:575px;top:460px;width:90px;height:25px;border-radius:3px;background:#2196f3;color:#fff;font-size:14.500px;-webkit-text-stroke:.35px #fff;letter-spacing:.5px;line-height:25px;text-align:center;white-space:nowrap">In Process</div>
<svg style="left:1186px;top:457px" width="22" height="22" viewBox="0 0 24 24"><path fill="#0b5f9b" d="M19.140 12.940c.040-.300.060-.610.060-.940 0-.320-.020-.640-.070-.940l2.030-1.580a.49.490 0 0 0 .12-.610l-1.920-3.320a.488.488 0 0 0-.590-.220l-2.390.960c-.500-.380-1.030-.700-1.620-.940l-.360-2.540a.484.484 0 0 0-.480-.410h-3.840c-.240 0-.430.170-.470.410l-.360 2.540c-.590.240-1.130.570-1.620.940l-2.390-.960c-.220-.080-.470 0-.590.220L2.740 8.870c-.120.210-.080.470.120.610l2.030 1.580c-.050.300-.090.630-.090.940s.020.640.070.940l-2.030 1.580a.49.490 0 0 0-.12.610l1.920 3.320c.120.220.370.290.590.220l2.390-.960c.500.380 1.030.700 1.620.940l.360 2.540c.050.240.240.410.480.410h3.840c.240 0 .440-.170.470-.410l.360-2.540c.590-.240 1.130-.560 1.620-.940l2.390.960c.220.080.470 0 .590-.220l1.920-3.320c.120-.220.070-.470-.120-.610l-2.010-1.580zM12 15.600c-1.980 0-3.600-1.620-3.600-3.600s1.620-3.600 3.600-3.600 3.600 1.620 3.600 3.600-1.620 3.600-3.600 3.600z"/></svg>
<div class="a" style="left:457px;top:521px;width:44px;height:25px;background:#f3f3f3;border-radius:2px"></div>
<svg style="left:504px;top:526px" width="16" height="16" viewBox="0 0 16 16"><circle cx="8" cy="8" r="8" fill="#0b5f9b"/><path d="M5 5l6 6M11 5l-6 6" stroke="#fff" stroke-width="1.500"/></svg>
<div class="a" style="left:553px;top:521px;width:117px;height:25px;background:#ededed;color:#0b5f9b;text-align:center;line-height:26px;white-space:nowrap;border-radius:1px;font-size:11px">POPULAR ITEMS</div>
<div class="a" style="left:680px;top:521px;width:79px;height:25px;background:#ededed;color:#0b5f9b;text-align:center;line-height:26px;white-space:nowrap;border-radius:1px;font-size:11px">ACTIONS</div>
<div class="a" style="left:760px;top:521px;width:22px;height:25px;background:#ededed;color:#0b5f9b;text-align:center;line-height:26px;white-space:nowrap;border-radius:1px;font-size:11px"></div>
<div class="tri" style="left:767px;top:532px;border-width:4px 4px 0 4px;border-top-color:#0b5f9b"></div>
<div class="a" style="left:790px;top:521px;width:134px;height:25px;background:#ededed;color:#0b5f9b;text-align:center;line-height:26px;white-space:nowrap;border-radius:1px;font-size:11px">CHECK PRICE COST</div>
<div class="a" style="left:932px;top:521px;width:101px;height:25px;background:#ededed;color:#0b5f9b;text-align:center;line-height:26px;white-space:nowrap;border-radius:1px;font-size:11px">ITEM DETAILS</div>
<div class="a" style="left:1041px;top:521px;width:75px;height:25px;background:#c6c6c6;color:#fff;text-align:center;line-height:26px;white-space:nowrap;border-radius:1px;font-size:11px">VOID</div>
<div class="a" style="left:1117px;top:521px;width:22px;height:25px;background:#ededed;color:#0b5f9b;text-align:center;line-height:26px;white-space:nowrap;border-radius:1px;font-size:11px"></div>
<div class="tri" style="left:1124px;top:532px;border-width:4px 4px 0 4px;border-top-color:#0b5f9b"></div>
<div class="a" style="left:1147px;top:521px;width:27px;height:25px;background:#ededed;color:#0b5f9b;text-align:center;line-height:26px;white-space:nowrap;border-radius:1px;font-size:11px"></div>
<div class="a" style="left:1182px;top:521px;width:27px;height:25px;background:#c6c6c6;color:#0b5f9b;text-align:center;line-height:26px;white-space:nowrap;border-radius:1px;font-size:11px"></div>
<svg style="left:1151px;top:524px" width="20" height="20" viewBox="0 0 20 20" fill="#0b5f9b"><rect x="4.0" y="0.0" width="2.200" height="2.200"/><rect x="4.0" y="4.3" width="2.200" height="2.200"/><rect x="4.0" y="8.6" width="2.200" height="2.200"/><rect x="4.0" y="12.9" width="2.200" height="2.200"/><rect x="8.3" y="0.0" width="2.200" height="2.200"/><rect x="8.3" y="12.9" width="2.200" height="2.200"/><rect x="12.6" y="0.0" width="2.200" height="2.200"/><rect x="12.6" y="12.9" width="2.200" height="2.200"/><rect x="16.9" y="0.0" width="2.200" height="2.200"/><rect x="16.9" y="4.3" width="2.200" height="2.200"/><rect x="16.9" y="8.6" width="2.200" height="2.200"/><rect x="16.9" y="12.9" width="2.200" height="2.200"/><path d="M0 8.500h2v10.300h-2zM0 16.800h11v2h-11z"/></svg>
<svg style="left:1186px;top:524px" width="20" height="20" viewBox="0 0 20 20" fill="#fff"><rect x="0.0" y="0.0" width="2.200" height="2.200"/><rect x="4.3" y="0.0" width="2.200" height="2.200"/><rect x="8.6" y="0.0" width="2.200" height="2.200"/><rect x="0.0" y="4.3" width="2.200" height="2.200"/><rect x="0.0" y="8.6" width="2.200" height="2.200"/><path d="M5.100 5.200h13v12.700h-13z" fill="none" stroke="#fff" stroke-width="2.200"/></svg>
<div class="a" style="left:457px;top:554px;width:752px;height:303px;background:#fff;border:1px solid #a9c6dd"></div>
<div class="a" style="left:458px;top:647px;width:736px;height:29px;background:#ecf3f7"></div>
<div class="a" style="left:458px;top:705px;width:736px;height:29px;background:#ecf3f7"></div>
<div class="a" style="left:458px;top:763px;width:736px;height:29px;background:#ecf3f7"></div>
<div class="a" style="left:458px;top:821px;width:736px;height:21px;background:#ecf3f7"></div>
<div class="a" style="left:488px;top:554px;width:1px;height:288px;background:#e3e8ec"></div>
<div class="a" style="left:527px;top:554px;width:1px;height:288px;background:#e3e8ec"></div>
<div class="a" style="left:609px;top:554px;width:1px;height:288px;background:#e3e8ec"></div>
<div class="a" style="left:759px;top:554px;width:1px;height:288px;background:#e3e8ec"></div>
<div class="a" style="left:839px;top:554px;width:1px;height:288px;background:#e3e8ec"></div>
<div class="a" style="left:909px;top:554px;width:1px;height:288px;background:#e3e8ec"></div>
<div class="a" style="left:989px;top:554px;width:1px;height:288px;background:#e3e8ec"></div>
<div class="a" style="left:1059px;top:554px;width:1px;height:288px;background:#e3e8ec"></div>
<div class="a" style="left:1159px;top:554px;width:1px;height:288px;background:#e3e8ec"></div>
<div class="a" style="left:1194px;top:554px;width:1px;height:288px;background:#e3e8ec"></div>
<div class="a" style="left:458px;top:587px;width:736px;height:1px;background:#0b5f9b"></div>
<div class="a" style="left:458px;top:617px;width:736px;height:1px;background:#0b5f9b"></div>
<div class="cb" style="left:464px;top:562px;width:18px;height:18px"></div>
<div class="t" style="left:494px;top:563px">#</div>
<div class="t" style="left:533px;top:563px">Item</div>
<div class="t" style="left:615px;top:563px">Description</div>
<div class="t" style="left:765px;top:563px">QTY</div>
<div class="t" style="left:845px;top:557px;line-height:15px;height:30px;white-space:normal;width:60px">Units Per Case</div>
<div class="t" style="left:915px;top:557px;line-height:15px;height:30px;white-space:normal;width:60px">Num. of Cases</div>
<div class="t" style="left:995px;top:563px">Case Rate</div>
<div class="t" style="left:1065px;top:563px">Rate</div>
<div class="t" style="left:1165px;top:563px;width:29px;overflow:hidden">Amount</div>
<div class="cb" style="left:464px;top:593px;width:18px;height:18px"></div>
<div class="t" style="left:494px;top:595px">1</div>
<svg style="left:534px;top:597px" width="12" height="12" viewBox="0 0 12 12"><rect width="12" height="12" rx="1.500" fill="#0b5f9b"/><path d="M2 9.500l2.500-3.500 2 2.500 1.500-1.800 2.200 2.800z" fill="#fff"/></svg>
<div class="t" style="left:553px;top:595px">00</div>
<svg style="left:740px;top:595px" width="14" height="14" viewBox="0 0 14 14" fill="#0b5f9b"><path d="M0 11v3h3l8-8-3-3zM13.700 2.800a.8.800 0 0 0 0-1.100l-1.400-1.400a.8.800 0 0 0-1.100 0l-1.400 1.400 3 3z"/></svg>
<div class="t" style="left:767px;top:595px">1</div>
<div class="t" style="left:1067px;top:595px;letter-spacing:-.4px">$10.00</div>
<div class="a" style="left:1127px;top:593px;width:18px;height:18px;border-radius:2px;background:#0b5f9b;color:#fff;font-size:10.500px;line-height:18px;text-align:center">LA</div>
<div class="a" style="left:1151px;top:595px;width:4px;height:4px;background:#0b5f9b"></div>
<div class="a" style="left:1151px;top:601px;width:4px;height:4px;background:#0b5f9b"></div>
<div class="a" style="left:1151px;top:607px;width:4px;height:4px;background:#0b5f9b"></div>
<div class="t" style="left:1167px;top:595px;width:27px;overflow:hidden;letter-spacing:-.4px">$10.00</div>
<div class="tri" style="left:595px;top:600px;border-width:6px 5px 0 5px;border-top-color:#b4b4b4"></div>
<div class="cb" style="left:464px;top:623px;width:18px;height:18px"></div>
<div class="tri" style="left:595px;top:630px;border-width:6px 5px 0 5px;border-top-color:#c6c6c6"></div>
<div class="cb" style="left:464px;top:652px;width:18px;height:18px"></div>
<div class="tri" style="left:595px;top:659px;border-width:6px 5px 0 5px;border-top-color:#c6c6c6"></div>
<div class="cb" style="left:464px;top:681px;width:18px;height:18px"></div>
<div class="tri" style="left:595px;top:688px;border-width:6px 5px 0 5px;border-top-color:#c6c6c6"></div>
<div class="cb" style="left:464px;top:710px;width:18px;height:18px"></div>
<div class="tri" style="left:595px;top:717px;border-width:6px 5px 0 5px;border-top-color:#c6c6c6"></div>
<div class="cb" style="left:464px;top:739px;width:18px;height:18px"></div>
<div class="tri" style="left:595px;top:746px;border-width:6px 5px 0 5px;border-top-color:#c6c6c6"></div>
<div class="cb" style="left:464px;top:768px;width:18px;height:18px"></div>
<div class="tri" style="left:595px;top:775px;border-width:6px 5px 0 5px;border-top-color:#c6c6c6"></div>
<div class="cb" style="left:464px;top:797px;width:18px;height:18px"></div>
<div class="tri" style="left:595px;top:804px;border-width:6px 5px 0 5px;border-top-color:#c6c6c6"></div>
<div class="cb" style="left:464px;top:826px;width:18px;height:16px;border-bottom:0;border-radius:2px 2px 0 0"></div>
<div class="tri" style="left:595px;top:833px;border-width:6px 5px 0 5px;border-top-color:#c6c6c6"></div>
<div class="a" style="left:1194px;top:555px;width:14px;height:300px;background:#fff"></div>
<div class="a" style="left:1198px;top:601px;width:6px;height:50px;background:#f0f0f0"></div>
<div class="a" style="left:458px;top:842px;width:736px;height:13px;background:#fff"></div>
<div class="a" style="left:470px;top:846px;width:449px;height:6px;background:#f0f0f0"></div>
<svg style="left:1196px;top:593px" width="10" height="6" viewBox="0 0 10 6"><path d="M1 5l4-4 4 4" fill="none" stroke="#ececec" stroke-width="1"/></svg>
<svg style="left:1196px;top:831px" width="10" height="6" viewBox="0 0 10 6"><path d="M1 1l4 4 4-4" fill="none" stroke="#ececec" stroke-width="1"/></svg>
<div class="a" style="left:459px;top:870px;width:22px;height:8px;background:#e0e0e0;border-radius:4px"></div>
<div class="a" style="left:457px;top:868px;width:12px;height:12px;background:#bdbdbd;border-radius:6px"></div>
<div class="t" style="left:491px;top:866px">Layaway</div>
<div class="a" style="left:558px;top:870px;width:22px;height:8px;background:#e0e0e0;border-radius:4px"></div>
<div class="a" style="left:556px;top:868px;width:12px;height:12px;background:#bdbdbd;border-radius:6px"></div>
<div class="t" style="left:590px;top:866px">Is Dropship</div>
<div class="a" style="left:459px;top:893px;width:22px;height:8px;background:#e0e0e0;border-radius:4px"></div>
<div class="a" style="left:457px;top:891px;width:12px;height:12px;background:#bdbdbd;border-radius:6px"></div>
<div class="t" style="left:491px;top:889px;letter-spacing:.25px">Require customer acknowledgment</div>
<div class="a" style="left:712px;top:893px;width:20px;height:8px;background:#b6c8f3;border-radius:4px"></div>
<div class="a" style="left:722px;top:891px;width:12px;height:12px;background:#0b5f9b;border-radius:6px"></div>
<div class="t" style="left:742px;top:889px">Show Order Total on PDF/WEB</div>
<div class="a" style="left:459px;top:916px;width:20px;height:8px;background:#b6c8f3;border-radius:4px"></div>
<div class="a" style="left:469px;top:914px;width:12px;height:12px;background:#0b5f9b;border-radius:6px"></div>
<div class="t" style="left:491px;top:912px;letter-spacing:.2px">Show item amount on PDF\WEB</div>
<div class="t" style="left:943px;top:891px;color:#666;font-size:11px">TAX</div>
<div class="a" style="left:964px;top:886px;width:90px;height:25px;background:#f3f3f3;border-radius:2px;color:#333;line-height:26px;padding-left:5px;white-space:nowrap;overflow:hidden">NYS</div>
<div class="tri" style="left:1040px;top:896px"></div>
<div class="t" style="left:1057px;top:891px;font-size:11px;letter-spacing:-.2px">(8.875 %)</div>
<div class="t" style="left:1129px;top:891px">Discount: <span style="color:#0b5f9b">0%</span></div>
<div class="a" style="left:449px;top:936px;width:768px;height:1px;background:#e0e0e0"></div>
<div class="a pbtn" style="left:467px;top:953px;width:137px;height:25px;line-height:26px">VOID ORDER</div>
<div class="a pbtn" style="left:605px;top:953px;width:22px;height:25px;line-height:26px"></div>
<div class="tri" style="left:612px;top:964px;border-width:4px 4px 0 4px;border-top-color:#fff"></div>
<div class="a" style="left:836px;top:953px;width:75px;height:25px;background:#ededed;color:#0b5f9b;text-align:center;line-height:26px;white-space:nowrap;border-radius:1px;font-size:11px">CANCEL</div>
<div class="a pbtn" style="left:921px;top:953px;width:137px;height:25px;line-height:26px">SAVE</div>
<div class="a pbtn" style="left:1059px;top:953px;width:22px;height:25px;line-height:26px"></div>
<div class="tri" style="left:1066px;top:964px;border-width:4px 4px 0 4px;border-top-color:#fff"></div>
<div class="a" style="left:1091px;top:953px;width:118px;height:25px;background:#c6c6c6;color:#fff;text-align:center;line-height:26px;white-space:nowrap;border-radius:1px;font-size:11px">CREATE INVOICE</div>
<div class="t" style="left:1231px;top:459px;font-size:11.800px;color:#3c3c3c;letter-spacing:-.2px">THIS ORDER</div>
<div class="t" style="left:1326px;top:459px;font-size:11.800px;color:#3c3c3c;letter-spacing:-.2px">CUSTOMER</div>
<div class="t" style="left:1435px;top:459px;font-size:11.800px;color:#3c3c3c;letter-spacing:-.2px">LOGS</div>
<div class="a" style="left:1218px;top:485px;width:279px;height:1px;background:#e6e6e6"></div>
<div class="a" style="left:1311px;top:484px;width:92px;height:2px;background:#0b5f9b"></div>
<div class="t" style="left:1234px;top:496px;font-size:12.500px;color:#222">SUMMARY</div>
<div class="t" style="left:1234px;top:524px;font-size:11px;color:#666;letter-spacing:.15px">Credit Limit:</div>
<div class="t" style="right:440px;top:524px;font-size:11px;letter-spacing:-.2px">$600,000.00</div>
<div class="t" style="left:1234px;top:539px;font-size:11px;color:#666;letter-spacing:.15px">Available Credit:</div>
<div class="t" style="right:440px;top:539px;font-size:11px;letter-spacing:-.2px">$599,274.73</div>
<div class="t" style="left:1234px;top:554px;font-size:11px;color:#666;letter-spacing:.15px">Open Invoices:</div>
<div class="t" style="right:440px;top:554px;font-size:11px;letter-spacing:-.2px">$0.00</div>
<div class="t" style="left:1234px;top:569px;font-size:11px;color:#666;letter-spacing:.15px">Credit:</div>
<div class="t" style="right:440px;top:569px;font-size:11px;letter-spacing:-.2px">$-625.00</div>
<div class="t" style="left:1234px;top:584px;font-size:11px;color:#666;letter-spacing:.15px">Deposits:</div>
<div class="t" style="right:440px;top:584px;font-size:11px;letter-spacing:-.2px">$400.00</div>
<div class="t" style="left:1234px;top:599px;font-size:11px;color:#666;letter-spacing:.15px">Open Balance:</div>
<div class="t" style="right:440px;top:599px;font-size:11px;letter-spacing:-.2px">$77.00</div>
<div class="t" style="left:1234px;top:614px;font-size:11px;color:#666;letter-spacing:.15px">Open Sale Orders:</div>
<div class="t" style="right:440px;top:614px;font-size:11px;letter-spacing:-.2px">10</div>
<div class="t" style="left:1234px;top:629px;font-size:11px;color:#666;letter-spacing:.15px">Phone:</div>
<div class="t" style="right:440px;top:629px;font-size:11px;letter-spacing:-.2px">13</div>
<div class="t" style="left:1234px;top:644px;font-size:11px;color:#666;letter-spacing:.15px">Email:</div>
<div class="t" style="left:1234px;top:658px;font-size:11px;color:#666;letter-spacing:.15px">Card on file:</div>
<div class="a" style="left:1218px;top:681px;width:279px;height:2px;background:#ececec"></div>
<div class="t" style="left:1234px;top:692px;font-size:12px;color:#222;letter-spacing:-.1px">RECENT TRANSACTION</div>
<div class="t" style="left:1235px;top:728px;font-weight:bold;font-size:11.500px">Sale Order</div>
<svg style="left:1449px;top:730px" width="7" height="12" viewBox="0 0 7 12"><path d="M1 1l5 5-5 5" fill="none" stroke="#858585" stroke-width="1.800"/></svg>
<div class="t" style="left:1235px;top:759px;font-weight:bold;font-size:11.500px">Ship Order</div>
<svg style="left:1449px;top:761px" width="7" height="12" viewBox="0 0 7 12"><path d="M1 1l5 5-5 5" fill="none" stroke="#858585" stroke-width="1.800"/></svg>
<div class="t" style="left:1235px;top:790px;font-weight:bold;font-size:11.500px">Invoice</div>
<svg style="left:1449px;top:792px" width="7" height="12" viewBox="0 0 7 12"><path d="M1 1l5 5-5 5" fill="none" stroke="#858585" stroke-width="1.800"/></svg>
<div class="a" style="left:1234px;top:751px;width:231px;height:1px;background:#e6e6e6"></div>
<div class="a" style="left:1234px;top:782px;width:231px;height:1px;background:#e6e6e6"></div>
<div class="a" style="left:1485px;top:698px;width:6px;height:60px;background:#ececec"></div>
<div class="a" style="left:1218px;top:811px;width:279px;height:2px;background:#ececec"></div>
<div class="a" style="left:1234px;top:827px;width:60px;height:25px;background:#ededed;color:#0b5f9b;text-align:center;line-height:26px;white-space:nowrap;border-radius:1px;font-size:11px">CARD</div>
<div class="a" style="left:1298px;top:827px;width:58px;height:25px;background:#ededed;color:#0b5f9b;text-align:center;line-height:26px;white-space:nowrap;border-radius:1px;font-size:11px">CHECK</div>
<div class="a" style="left:1359px;top:827px;width:58px;height:25px;background:#ededed;color:#0b5f9b;text-align:center;line-height:26px;white-space:nowrap;border-radius:1px;font-size:11px">CASH</div>
<div class="a" style="left:1420px;top:827px;width:60px;height:25px;background:#ededed;color:#0b5f9b;text-align:center;line-height:26px;white-space:nowrap;border-radius:1px;font-size:11px">CRDT</div>
<div class="a" style="left:1218px;top:864px;width:279px;height:1px;background:#ececec"></div>
<div class="t" style="left:1226px;top:873px;font-weight:bold;letter-spacing:-.2px">Open Balance</div>
<div class="t" style="left:1226px;top:888px">SubTotal:</div>
<div class="t" style="right:447px;top:888px;letter-spacing:-.4px">$10.00</div>
<div class="t" style="left:1226px;top:903px">Discount:</div>
<div class="t" style="right:447px;top:903px;letter-spacing:-.4px">$0</div>
<div class="t" style="left:1226px;top:918px">Tax:</div>
<div class="t" style="right:447px;top:918px;letter-spacing:-.4px">$0.00</div>
<div class="t" style="left:1226px;top:933px;font-weight:bold">Total:</div>
<div class="t" style="right:447px;top:933px;font-weight:bold;letter-spacing:-.4px">$10.00</div>
<div class="t" style="left:1226px;top:948px;color:#0b5f9b">Currency:</div>
<div class="a" style="left:1485px;top:879px;width:6px;height:69px;background:#ececec"></div>
<div class="a" style="left:1226px;top:971px;width:247px;height:1px;background:#e6e6e6"></div>
<div class="a" style="left:1218px;top:985px;width:270px;height:9px;overflow:hidden"><div class="t" style="left:16px;top:4px;font-weight:bold">Payments:</div><div class="t" style="right:23px;top:4px">$0</div></div>
<!--SOWIN-->
<!--ANNOT_START-->
<div class="a" style="left:427px;top:395px;width:197px;height:70px;border:4px solid #fa5a4b;border-radius:1px;filter:drop-shadow(2px 2px 1.500px rgba(0,0,0,.65))"></div>
<div class="a" style="left:53px;top:890px;width:260px;height:79px;border:4px solid #fa5a4b;border-radius:1px;filter:drop-shadow(2px 2px 1.500px rgba(0,0,0,.65))"></div>
<div class="a" style="left:1470px;top:974px;width:442px;height:61px;border:4px solid #fa5a4b;border-radius:1px;filter:drop-shadow(2px 2px 1.500px rgba(0,0,0,.65))"></div>
<!--ANNOT-->
</div>
</body>
</html>
